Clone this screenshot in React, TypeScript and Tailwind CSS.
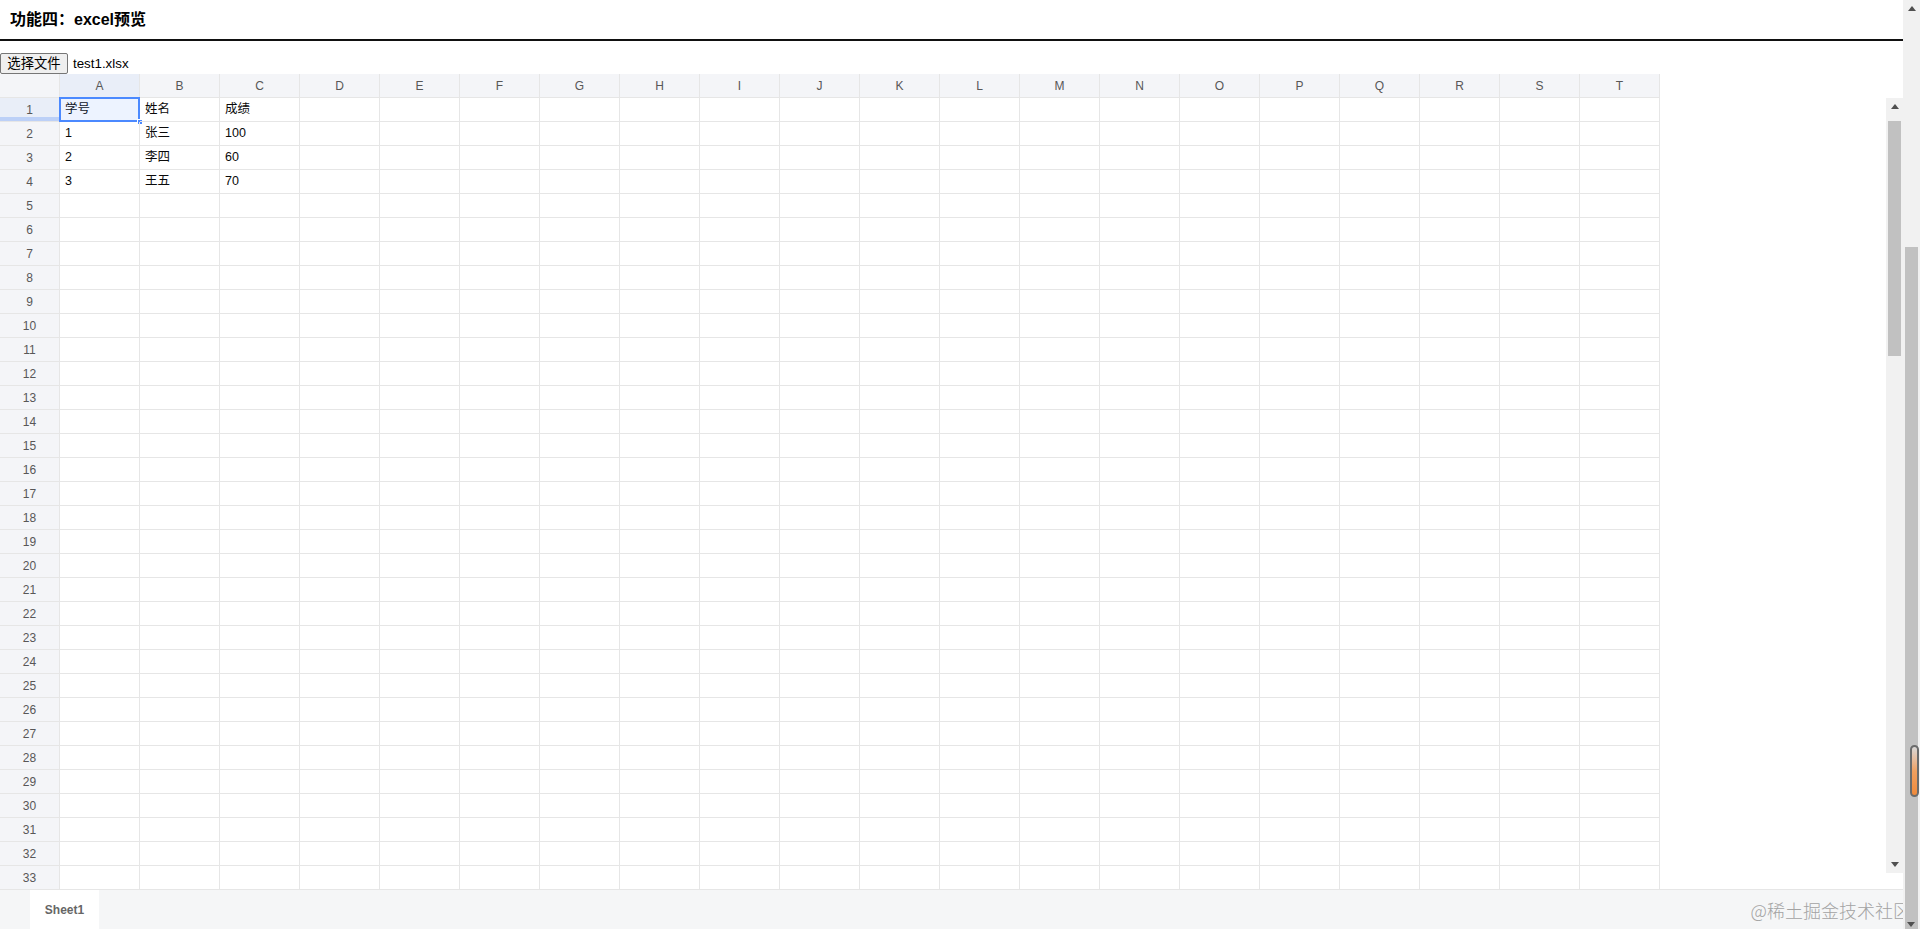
import React from 'react';

const COLS = 'ABCDEFGHIJKLMNOPQRST'.split('');
const ROW_COUNT = 33;

const DATA: Record<number, string[]> = {
  1: ['学号', '姓名', '成绩'],
  2: ['1', '张三', '100'],
  3: ['2', '李四', '60'],
  4: ['3', '王五', '70'],
};

const UpArrow = () => (
  <svg width="8" height="5" viewBox="0 0 8 5">
    <path d="M0 5 L4 0 L8 5 Z" fill="#505050" />
  </svg>
);

const DownArrow = () => (
  <svg width="8" height="5" viewBox="0 0 8 5">
    <path d="M0 0 L4 5 L8 0 Z" fill="#505050" />
  </svg>
);

const SheetGrid: React.FC = () => {
  return (
    <div className="w-[1660px] shrink-0">
      {/* column header */}
      <div className="flex h-[24px] bg-[#f4f5f8]">
        <div className="w-[60px] shrink-0 border-r border-b border-[#e6e6e6]" />
        {COLS.map((c, i) => (
          <div
            key={c}
            className={`w-[80px] shrink-0 border-r border-b border-[#e6e6e6] flex items-center justify-center text-[12px] text-[#585757] ${
              i === 0 ? 'bg-[#e9eef8]' : ''
            }`}
          >
            {c}
          </div>
        ))}
      </div>

      {/* rows */}
      {Array.from({ length: ROW_COUNT }, (_, r) => {
        const rowNo = r + 1;
        const values = DATA[rowNo] || [];
        return (
          <div key={rowNo} className="flex h-[24px]">
            <div
              className={`relative w-[60px] shrink-0 border-r border-b border-[#e6e6e6] flex items-center justify-center text-[12px] text-[#585757] ${
                rowNo === 1 ? 'bg-[#e9eef8]' : 'bg-[#f4f5f8]'
              }`}
            >
              {rowNo}
              {rowNo === 1 && <div className="absolute left-0 right-0 bottom-0 h-[4px] bg-[#bcd0f7]" />}
            </div>
            {COLS.map((c, i) => (
              <div
                key={c}
                className="relative w-[80px] shrink-0 border-r border-b border-[#e6e6e6] flex items-center pl-[5px] text-[12.5px] text-[#0a0a0a]"
              >
                {values[i] || ''}
                {rowNo === 1 && i === 0 && (
                  <>
                    <div className="absolute -left-px -top-px w-[81px] h-[25px] border-2 border-[#4b89ff] bg-[#4b89ff]/10" />
                    <div className="absolute right-[-4px] bottom-[-4px] w-[6px] h-[6px] bg-[#4b89ff] border border-white" />
                  </>
                )}
              </div>
            ))}
          </div>
        );
      })}
    </div>
  );
};

const App: React.FC = () => {
  return (
    <div className="w-[1920px] h-[929px] overflow-hidden flex bg-white font-['Liberation_Sans','Noto_Sans_CJK_SC',sans-serif] text-black">
      <div className="flex-1 flex flex-col min-w-0">
        {/* title */}
        <div className="h-[39px] flex items-center pl-[10px] text-[16px] font-bold">功能四：excel预览</div>
        <div className="h-[2px] bg-[#111]" />

        {/* file input */}
        <div className="flex items-center mt-[12px] h-[21px]">
          <button className="h-[21px] w-[68px] px-[6px] bg-[#efefef] border border-[#767676] rounded-[2px] text-[13.33px] leading-none text-black">
            选择文件
          </button>
          <span className="ml-[5px] text-[13.33px]">test1.xlsx</span>
        </div>

        {/* spreadsheet */}
        <div className="flex-1 flex flex-col min-h-0">
          <div className="flex flex-1 min-h-0">
            <SheetGrid />
            <div className="flex-1" />
            <div className="w-[17px] flex flex-col pt-[24px]">
              <div className="h-[775px] bg-[#f1f1f1] flex flex-col items-center">
                <div className="h-[17px] flex items-center justify-center">
                  <UpArrow />
                </div>
                <div className="mt-[6px] w-[13px] h-[235px] bg-[#c1c1c1]" />
                <div className="flex-1" />
                <div className="h-[17px] flex items-center justify-center">
                  <DownArrow />
                </div>
              </div>
            </div>
          </div>

          {/* bottom bar */}
          <div className="h-[40px] bg-[#f5f6f7] border-t border-[#e6e6e6] flex items-stretch pl-[30px] relative">
            <div className="w-[69px] bg-white flex items-center justify-center text-[12px] font-bold text-[#666]">Sheet1</div>
            <div className="flex-1" />
            <div className="self-end mb-[5px] mr-[-8px] text-[18px] text-[#a3a3a3] font-['Noto_Sans_CJK_SC',serif] font-light">
              @稀土掘金技术社区
            </div>
          </div>
        </div>
      </div>

      {/* page scrollbar */}
      <div className="w-[17px] h-full bg-[#f1f1f1] flex flex-col items-center relative">
        <div className="h-[17px] flex items-center justify-center">
          <UpArrow />
        </div>
        <div className="mt-[230px] w-[13px] flex-1 bg-[#c1c1c1]" />
        <div className="absolute top-[745px] left-[7px] w-[9px] h-[52px] rounded-[5px] border-2 border-[#6b6b6b] bg-gradient-to-b from-[#d8d8d8] via-[#f0a060] to-[#f08a3a]" />
        <div className="absolute bottom-[2px] left-[4px]">
          <DownArrow />
        </div>
      </div>
    </div>
  );
};

export default App;
